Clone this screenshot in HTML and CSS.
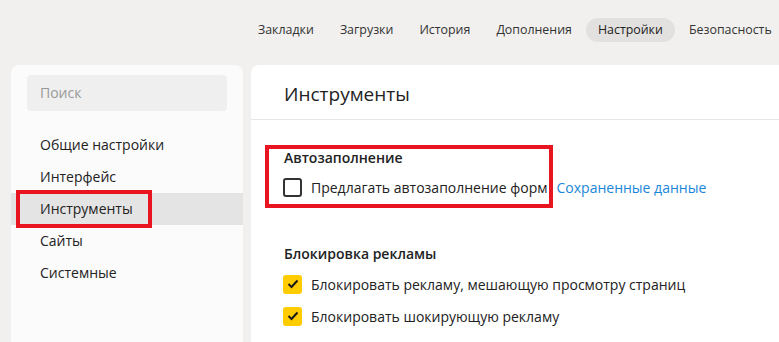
FILE: index.html
```html
<!DOCTYPE html>
<html lang="ru">
<head>
  <meta charset="UTF-8" />
  <title>Настройки</title>
  <link rel="stylesheet" href="styles.css">
</head>
<body>

  <div class="topnav">
    <a class="nav-item">Закладки</a>
    <a class="nav-item">Загрузки</a>
    <a class="nav-item">История</a>
    <a class="nav-item">Дополнения</a>
    <a class="nav-item active">Настройки</a>
    <a class="nav-item">Безопасность</a>
  </div>

  <div class="layout">
    <div class="sidebar">
      <div class="search">Поиск</div>
      <div class="menu">
        <div class="menu-item">Общие настройки</div>
        <div class="menu-item">Интерфейс</div>
        <div class="menu-item selected">Инструменты<span class="mark mark-side"></span></div>
        <div class="menu-item">Сайты</div>
        <div class="menu-item">Системные</div>
      </div>
    </div>

    <div class="content">
      <div class="content-header">Инструменты</div>

      <div class="section autofill">
        <span class="mark mark-autofill"></span>
        <div class="section-title">Автозаполнение</div>
        <div class="option">
          <span class="checkbox"></span>
          <span class="label">Предлагать автозаполнение форм</span>
          <a class="link">Сохраненные данные</a>
        </div>
      </div>

      <div class="section">
        <div class="section-title">Блокировка рекламы</div>
        <div class="option">
          <span class="checkbox checked">
            <svg width="12" height="10" viewBox="0 0 12 10"><path d="M1.5 5l3 3 6-6.5" fill="none" stroke="#1a1a1a" stroke-width="2"/></svg>
          </span>
          <span class="label">Блокировать рекламу, мешающую просмотру страниц</span>
        </div>
        <div class="option">
          <span class="checkbox checked">
            <svg width="12" height="10" viewBox="0 0 12 10"><path d="M1.5 5l3 3 6-6.5" fill="none" stroke="#1a1a1a" stroke-width="2"/></svg>
          </span>
          <span class="label">Блокировать шокирующую рекламу</span>
        </div>
      </div>
    </div>
  </div>

</body>
</html>
```

FILE: styles.css
```css
* {
  box-sizing: border-box;
}
body {
  margin: 0;
  font-family: 'Open Sans', 'Noto Sans', sans-serif;
  background-color: #f1f0ee;
  color: #222;
  height: 100vh;
  overflow: hidden;
  display: flex;
  flex-direction: column;
}
.topnav {
  height: 60px;
  flex-shrink: 0;
  display: flex;
  align-items: center;
  gap: 2px;
  padding-left: 246px;
  white-space: nowrap;
}
.nav-item {
  height: 24px;
  line-height: 24px;
  padding: 0 12px;
  border-radius: 12px;
  font-size: 12.4px;
  color: #333;
}
.nav-item.active {
  background: #e2e1df;
  color: #222;
}
.layout {
  flex: 1;
  display: flex;
  gap: 8px;
  padding: 5px 0 0 11px;
  margin-right: -20px;
}
.sidebar {
  width: 232px;
  flex-shrink: 0;
  background: #fbfbfb;
  border-radius: 8px 8px 0 0;
  padding-top: 10px;
}
.search {
  margin: 0 16px;
  height: 36px;
  line-height: 36px;
  padding-left: 13px;
  background: #efefef;
  border-radius: 4px;
  color: #999;
  font-size: 14px;
}
.menu {
  margin-top: 18px;
}
.menu-item {
  position: relative;
  height: 32px;
  line-height: 32px;
  padding-left: 29px;
  font-size: 14px;
  color: #222;
}
.menu-item.selected {
  background: #e4e4e4;
}
.mark {
  position: absolute;
  border: 4px solid #e8141f;
}
.mark-side {
  left: 5px;
  top: -3px;
  width: 136px;
  height: 38px;
}
.content {
  flex: 1;
  background: #fff;
  border-radius: 8px 8px 0 0;
}
.content-header {
  height: 55px;
  line-height: 58px;
  padding-left: 33px;
  font-size: 19px;
  color: #222;
  border-bottom: 1px solid #e6e6e6;
}
.section {
  position: relative;
  margin-left: 33px;
}
.autofill {
  margin-top: 28px;
  margin-bottom: 41px;
}
.mark-autofill {
  left: -19px;
  top: -3px;
  width: 288px;
  height: 63px;
}
.section-title {
  height: 20px;
  line-height: 20px;
  font-size: 14px;
  font-weight: 600;
  margin-bottom: 3px;
}
.section + .section .section-title {
  margin-bottom: 4px;
}
.option {
  display: flex;
  align-items: center;
  height: 32px;
  font-size: 14px;
}
.checkbox {
  width: 19px;
  height: 19px;
  margin-left: -1px;
  margin-right: 9px;
  border: 2px solid #333;
  border-radius: 3px;
  display: flex;
  align-items: center;
  justify-content: center;
}
.checkbox.checked {
  border: none;
  background: #ffcc00;
}
.label {
  color: #222;
}
.link {
  margin-left: 9px;
  color: #1a86d9;
  cursor: pointer;
}
```
